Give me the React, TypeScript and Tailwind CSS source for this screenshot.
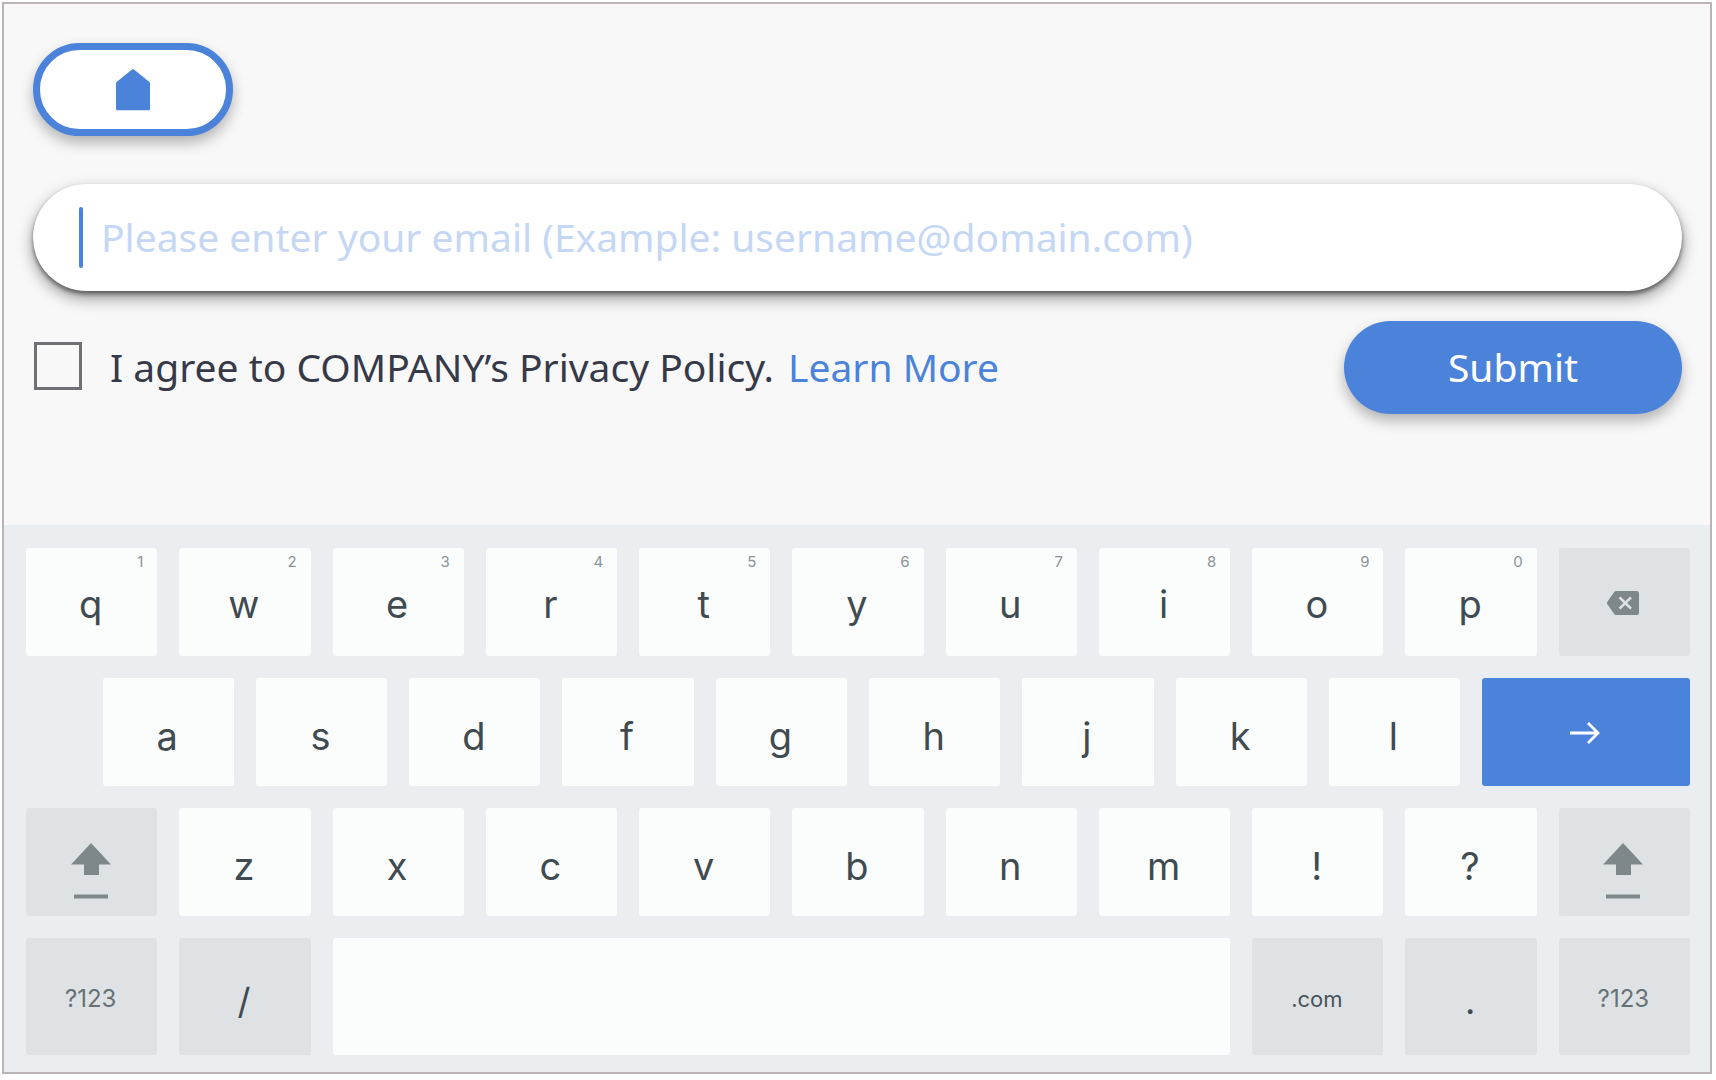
import { useState, type ReactNode } from "react";

type KeyProps = {
  children?: ReactNode;
  label?: string;
  hint?: string;
  className?: string;
  onPress?: () => void;
};

const letterKey = "col-span-2 bg-[#fbfdfc] pr-0.5 text-[38px] text-[#3f4b51]";
const greyKey = "col-span-2 bg-[#dfe2e5] pr-0.5";

function Key({ children, label, hint, className = "", onPress }: KeyProps) {
  return (
    <button
      type="button"
      aria-label={label}
      onClick={onPress}
      className={`relative flex items-center justify-center rounded-[3px] leading-none ${className}`}
    >
      {hint && (
        <span className="absolute top-1.5 right-3.5 text-[15px] leading-none text-[#8c9395]">{hint}</span>
      )}
      {children}
    </button>
  );
}

function HomeIcon() {
  return (
    <svg width="34" height="42" viewBox="0 0 34 42" fill="#4b83da" aria-hidden="true">
      <path d="M16 .5a1.600 1.600 0 0 1 2 0L33.400 13a1.600 1.600 0 0 1 .6 1.200V40a1.300 1.300 0 0 1-1.300 1.300H1.300A1.300 1.300 0 0 1 0 40V14.200a1.600 1.600 0 0 1 .6-1.200Z" />
    </svg>
  );
}

function BackspaceIcon() {
  return (
    <svg width="32" height="24" viewBox="0 0 32 24" aria-hidden="true">
      <path d="M9.500 0H29.500A2.500 2.500 0 0 1 32 2.500V21.500A2.500 2.500 0 0 1 29.500 24H9.500A3 3 0 0 1 7 22.800L.4 13.200a2 2 0 0 1 0-2.400L7 1.200A3 3 0 0 1 9.500 0Z" fill="#7e888b" />
      <path d="M12.600 6.300 24 17.700M24 6.300 12.600 17.700" stroke="#dfe2e5" strokeWidth="2.600" />
    </svg>
  );
}

function ArrowIcon() {
  return (
    <svg width="30" height="22" viewBox="0 0 30 22" fill="none" stroke="#fff" strokeWidth="2.800" aria-hidden="true">
      <path d="M0 11H28M18 1 28 11 18 21" />
    </svg>
  );
}

function ShiftIcon() {
  return (
    <svg width="40" height="56" viewBox="0 0 40 56" fill="#7e888b" aria-hidden="true">
      <path d="M20 0 40 21.500H28V32H13V21.500H0Z" />
      <path d="M3 51.500H37V55.500H3Z" />
    </svg>
  );
}

export default function App() {
  const [email, setEmail] = useState("");
  const type = (s: string) => () => setEmail((v) => v + s);

  return (
    <div className="flex min-h-screen bg-white pt-0.5 pr-1 pb-1.5 pl-0.5 font-['Noto_Sans',sans-serif]">
      <div className="flex flex-1 flex-col border-2 border-[#bab4b7] bg-[#f8f8f8]">
        <form
          className="flex flex-1 flex-col items-start pt-[39px] pr-7 pb-10 pl-[29px]"
          onSubmit={(e) => e.preventDefault()}
        >
          <button
            type="button"
            aria-label="Home"
            className="flex h-[93px] w-[200px] items-center justify-center rounded-full border-[7px] border-[#4b83da] bg-white shadow-[0_7px_14px_rgba(0,0,0,0.28)]"
          >
            <HomeIcon />
          </button>

          <label className="mt-12 flex h-[107px] w-full items-center rounded-full bg-white pr-12 pl-[46px] shadow-[0_3px_4px_rgba(0,0,0,0.45),0_7px_16px_rgba(0,0,0,0.4)]">
            <span className="h-[61px] w-1 rounded-full bg-[#4b83da]" />
            <input
              type="email"
              aria-label="Email"
              value={email}
              onChange={(e) => setEmail(e.target.value)}
              placeholder="Please enter your email (Example: username@domain.com)"
              className="ml-[18px] min-w-0 flex-1 bg-transparent text-[39px] text-[#363a48] outline-none placeholder:text-[#c5d7f4]"
            />
          </label>

          <div className="mt-[30px] flex w-full items-center justify-between">
            <div className="flex items-center pl-px text-[39px] text-[#363a48]">
              <input
                id="agree"
                type="checkbox"
                className="mb-1 size-12 shrink-0 appearance-none border-[3px] border-[#707074] checked:bg-[#4b83da]"
              />
              <label htmlFor="agree" className="ml-7">
                I agree to COMPANY’s Privacy Policy.
              </label>
              <a href="#learn-more" className="ml-3.5 text-[#4b83da]">
                Learn More
              </a>
            </div>
            <button
              type="submit"
              className="h-[93px] w-[338px] rounded-full bg-[#4b83da] text-[39px] text-white shadow-[0_7px_14px_rgba(0,0,0,0.28)]"
            >
              Submit
            </button>
          </div>
        </form>

        <div className="grid grid-cols-22 grid-rows-[108px_108px_108px_117px] gap-[22px] bg-[#ebeef1] pt-[23px] pr-5 pb-[17px] pl-[22px] font-['Inter',sans-serif]">
          {"qwertyuiop".split("").map((c, i) => (
            <Key key={c} hint={String((i + 1) % 10)} onPress={type(c)} className={`${letterKey} pt-1`}>
              {c}
            </Key>
          ))}
          <Key label="Backspace" onPress={() => setEmail((v) => v.slice(0, -1))} className={`${greyKey} pt-0.5`}>
            <BackspaceIcon />
          </Key>

          {"asdfghjkl".split("").map((c, i) => (
            <Key key={c} onPress={type(c)} className={`${letterKey} pt-2 ${i === 0 ? "col-start-2" : ""}`}>
              {c}
            </Key>
          ))}
          <Key label="Enter" className="col-span-3 bg-[#4b83da] pt-0.5 pr-0.5">
            <ArrowIcon />
          </Key>

          <Key label="Shift" className={`${greyKey} pt-[18px]`}>
            <ShiftIcon />
          </Key>
          {"zxcvbnm!?".split("").map((c) => (
            <Key key={c} onPress={type(c)} className={`${letterKey} pt-2`}>
              {c}
            </Key>
          ))}
          <Key label="Right shift" className={`${greyKey} pt-[18px]`}>
            <ShiftIcon />
          </Key>

          <Key className={`${greyKey} pt-1 text-2xl text-[#677175]`}>?123</Key>
          <Key onPress={type("/")} className={`${greyKey} pt-2 text-4xl text-[#3f4b51]`}>
            /
          </Key>
          <Key label="Space" onPress={type(" ")} className="col-span-12 bg-[#fbfdfc]" />
          <Key onPress={type(".com")} className={`${greyKey} pt-1 text-[22px] text-[#48545a]`}>
            .com
          </Key>
          <Key onPress={type(".")} className={`${greyKey} pt-2 text-4xl text-[#3f4b51]`}>
            .
          </Key>
          <Key className={`${greyKey} pt-1 text-2xl text-[#677175]`}>?123</Key>
        </div>
      </div>
    </div>
  );
}
